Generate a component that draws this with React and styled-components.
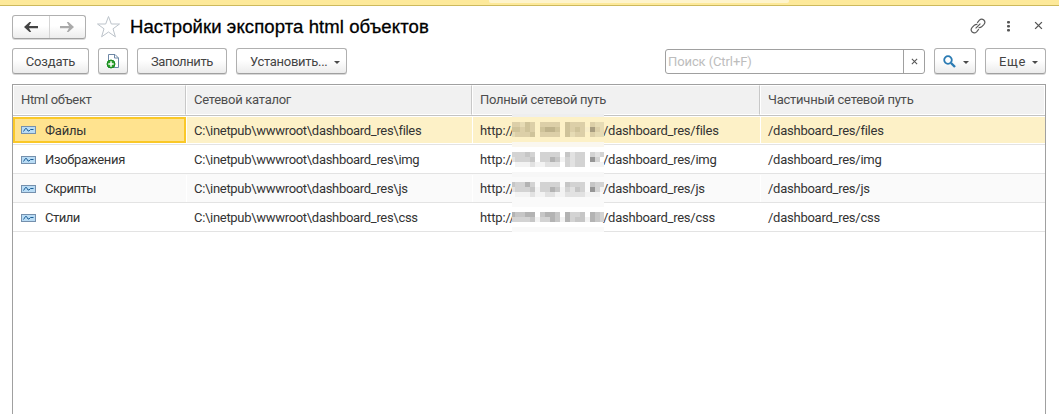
import React from 'react';
import styled, { createGlobalStyle, css } from 'styled-components';

const Global = createGlobalStyle`
  * { box-sizing: border-box; }
  html, body { margin: 0; padding: 0; background: #fff; overflow: hidden; }
  body { font: 13px/15px Roboto, "Liberation Sans", sans-serif; color: #333; }
`;

const Page = styled.div`
  width: 1059px;
  height: 414px;
  display: flex;
  flex-direction: column;
  overflow: hidden;
`;
const TopStrip = styled.div`
  flex: none;
  height: 6px;
  padding-left: 489px;
  background: #fde99a;
  border-bottom: 1px solid #cdb95c;
`;
const ActiveTab = styled.div`
  width: 300px;
  height: 3px;
  background: #fef4cc;
  border-radius: 0 0 2px 2px;
`;
const TitleBar = styled.header`
  flex: none;
  display: flex;
  align-items: center;
  height: 42px;
  padding: 0 16px 0 12px;
`;
const raised = css`
  border: 1px solid #b0b0b0;
  border-bottom-color: #a0a0a0;
  border-radius: 3px;
  background: linear-gradient(#fff 45%, #ececec);
  box-shadow: 0 1px 0 #d8d8d8;
`;
const NavGroup = styled.div`
  ${raised}
  display: flex;
  width: 74px;
  height: 24px;
`;
const NavButton = styled.div`
  flex: 1;
  display: flex;
  align-items: center;
  justify-content: center;
  & + & { border-left: 1px solid #d4d4d4; }
`;
const Star = styled.svg`
  margin: 0 0 0 10px;
`;
const Title = styled.h1`
  flex: 1;
  margin: 0 0 0 9px;
  font: 18.5px/22px "Liberation Sans", Arial, sans-serif;
  letter-spacing: 0.1px;
  color: #000;
  -webkit-text-stroke: 0.3px #000;
`;
const WindowTools = styled.div`
  display: flex;
  align-items: center;
  margin-top: -3px;
`;
const Toolbar = styled.div`
  flex: none;
  display: flex;
  height: 36px;
  padding: 0 13px 0 12px;
`;
const Button = styled.div`
  ${raised}
  flex: none;
  display: flex;
  align-items: center;
  justify-content: ${p => (p.$start ? 'flex-start' : 'center')};
  padding-left: ${p => p.$start || 0}px;
  width: ${p => p.$w}px;
  height: 26px;
  margin-right: ${p => p.$mr || 0}px;
  color: #444;
  letter-spacing: ${p => p.$ls || 0}px;
  white-space: nowrap;
`;
const Caret = styled.svg`
  flex: none;
  margin-left: ${p => p.$ml}px;
  margin-top: 2px;
`;
const Search = styled.div`
  display: flex;
  width: 260px;
  height: 25px;
  margin: 1px 9px 0 auto;
  border: 1px solid #a0a0a0;
  border-radius: 3px;
`;
const Placeholder = styled.div`
  flex: 1;
  padding: 4px 0 0 2px;
  color: #bdbdbd;
  letter-spacing: -0.1px;
`;
const Clear = styled.div`
  width: 21px;
  display: flex;
  align-items: center;
  justify-content: center;
  border-left: 1px solid #a0a0a0;
`;
const Table = styled.div`
  flex: 1;
  display: flex;
  flex-direction: column;
  width: 1034px;
  margin-left: 12px;
  border: 1px solid #a0a0a0;
  border-bottom: 0;
`;
const columns = css`
  display: grid;
  grid-template-columns: 173px 286px 288px 285px;
`;
const HeadRow = styled.div`
  ${columns}
  flex: none;
  height: 31px;
  border-bottom: 1px solid #c3c3c3;
`;
const HeadCell = styled.div`
  padding: 6px 0 0 7px;
  border: 1px solid #fff;
  border-right: 1px solid ${p => (p.$last ? '#fff' : '#c8c8c8')};
  background: #f1f1f1;
  color: #4d4d4d;
  letter-spacing: ${p => p.$ls}px;
`;
const Row = styled.div`
  ${columns}
  flex: none;
  height: 29px;
  padding-top: 1px;
  border-bottom: 1px solid #e3e3e3;
  background: ${p => (p.$alt ? '#fafafa' : '#fff')};
`;
const Cell = styled.div`
  display: flex;
  align-items: center;
  height: ${p => (p.$selected || p.$active ? 26 : 27)}px;
  padding-left: 8px;
  letter-spacing: ${p => p.$ls}px;
  white-space: pre;
  ${p => p.$selected && css`
    background: #fdf1c7;
    & + & { border-left: 1px solid #fff; padding-left: 7px; }
  `}
  ${p => p.$active && css`
    background: #ffe38f;
    border: 2px solid #fac828;
    padding-left: 6px;
  `}
`;
const NameIcon = styled.svg`
  margin-right: 9px;
`;
const Mask = styled.svg`
  position: relative;
  z-index: 1;
  flex: none;
  align-self: flex-start;
  overflow: visible;
  margin-right: -1px;
`;
const PathPrefix = styled.span`
  width: 32px;
  letter-spacing: -0.1px;
`;

const Arrow = ({ color, flip }) => (
  <svg width="14" height="10" viewBox="0 0 14 10">
    <g transform={flip ? 'translate(14 0) scale(-1 1)' : undefined}>
      <path d="M0 5L5.5 0H7.2L5 4H14V6.3H5L7.2 10H5.5Z" fill={color} />
    </g>
  </svg>
);
const Down = ({ ml }) => (
  <Caret $ml={ml} width="6" height="3" viewBox="0 0 6 3"><path d="M0 0H6L3 3Z" fill="#4a4a4a" /></Caret>
);
const Cross = ({ size, color }) => (
  <svg width={size} height={size} viewBox="0 0 8 8">
    <path d="M1 1L7 7M7 1L1 7" stroke={color} strokeWidth="1.2" />
  </svg>
);
const LineIcon = () => (
  <NameIcon width="15" height="8" viewBox="0 0 15 8">
    <rect x="0.5" y="0.5" width="14" height="7" fill="#b9dcf5" stroke="#7590ad" />
    <path d="M2.5 5.5L4.5 2.5H5.5L7 5H8L9.5 3.5H12.5" fill="none" stroke="#1d5f96" />
  </NameIcon>
);

const PALETTE = {
  gray: { a: '#f3f3f3', b: '#e2e2e2', c: '#d3d3d3', d: '#c6c6c6', e: '#b3b3b3', f: '#969696' },
  gold: { a: '#f8edc9', b: '#e6dbb4', c: '#dccfa8', d: '#cfc39a', e: '#bfb38c', f: '#a89d80' },
};
const MASKS = [
  { top: 5, strip: 25, fill: '#faf7ef', lines: ['ccbdc.cccc.dccc.cbb', 'ddcdc.deed.dcdcafcb', 'bcccd.cccc.dbcc.cbb'] },
  { top: 6, strip: 26, fill: '#f7f7f7', lines: ['cccdc.cccc.dbcc.cbc', 'bcccd.ccedacbcc.fc.', '.aaabaabbb.cbcc.aaa'] },
  { top: 7, strip: 27, fill: '#fafafa', lines: ['dccec.cccc.dccc.dcc', 'bcccdaccedacbdc.fca', '.aaabaabbaabbbbaaa.'] },
  { top: 8, strip: 23, fill: '#f9f9f9', lines: ['eddee.deed.eccd.edc', 'ccccdaccedaecddaedc'] },
];

const Pixels = ({ index }) => {
  const colors = index === 0 ? PALETTE.gold : PALETTE.gray;
  const { top, strip, fill, lines } = MASKS[index];
  return (
    <Mask width="92" height="26" viewBox="0 0 92 26" shapeRendering="crispEdges">
      {index === 0 && <rect x="0" y="-3" width="92" height="3" fill="#eeeeef" />}
      <rect x="0" y={strip} width="92" height="5" fill={fill} />
      {lines.map((line, y) =>
        [...line].map((v, x) =>
          colors[v] && (
            <rect key={`${x}-${y}`} x={x ? x * 5 - 2 : 0} y={top + y * 5} width={x === 0 ? 3 : x === 18 ? 4 : 5} height="5" fill={colors[v]} />
          )
        )
      )}
    </Mask>
  );
};

const ROWS = [
  ['Файлы', 'files', -0.2],
  ['Изображения', 'img', -0.33],
  ['Скрипты', 'js', -0.45],
  ['Стили', 'css', -0.5],
];

export default function App() {
  return (
    <Page>
      <Global />
      <TopStrip><ActiveTab /></TopStrip>
      <TitleBar>
        <NavGroup>
          <NavButton><Arrow color="#444" /></NavButton>
          <NavButton><Arrow color="#aaa" flip /></NavButton>
        </NavGroup>
        <Star width="25" height="24" viewBox="0 0 25 24">
          <path d="M12.5 1.5L15.3 9H23.5L17 13.8L19.4 21.8L12.5 17L5.6 21.8L8 13.8L1.5 9H9.7Z" fill="#fff" stroke="#bcc3ca" />
        </Star>
        <Title>Настройки экспорта html объектов</Title>
        <WindowTools>
          <svg width="16" height="16" viewBox="0 0 16 16" fill="none" stroke="#5a5a5a" strokeWidth="1.2">
            <path d="M7.2 4.8L9.4 2.2Q11.6 0 13.8 2Q16 4.2 13.8 6.6L11.6 8.8Q10.2 10 8.6 9.6" />
            <path d="M8.8 11.2L6.6 13.8Q4.4 16 2.2 14Q0 11.8 2.2 9.4L4.4 7.2Q5.8 6 7.4 6.4" />
            <path d="M5.6 10.4L10.4 5.6" />
          </svg>
          <svg width="48" height="12" viewBox="0 0 48 12" fill="#555">
            <rect x="21" y="1" width="3" height="2.5" rx="1" /><rect x="21" y="5" width="3" height="2.5" rx="1" /><rect x="21" y="9" width="3" height="2.5" rx="1" />
          </svg>
          <Cross size={9} color="#555" />
        </WindowTools>
      </TitleBar>
      <Toolbar>
        <Button $w={77} $mr={9} $ls={-0.17}>Создать</Button>
        <Button $w={30} $mr={9}>
          <svg width="14" height="16" viewBox="0 0 14 16">
            <path d="M2.5 1.5H9L12.5 5V14.5H2.5Z" fill="#fff" stroke="#6d87a5" />
            <path d="M8.5 1.5V5H12.5" fill="none" stroke="#6d87a5" />
            <circle cx="5" cy="11" r="4" fill="#2ca02c" stroke="#168a1f" />
            <path d="M2.3 11H7.7M5 8.3V13.7" stroke="#fff" strokeWidth="1.5" />
          </svg>
        </Button>
        <Button $w={90} $mr={9} $ls={-0.38}>Заполнить</Button>
        <Button $w={111} $start={13} $ls={-0.29}>Установить...<Down ml={7} /></Button>
        <Search>
          <Placeholder>Поиск (Ctrl+F)</Placeholder>
          <Clear><Cross size={7} color="#555" /></Clear>
        </Search>
        <Button $w={42} $mr={9} $start={8}>
          <svg width="13" height="13" viewBox="0 0 13 13" fill="none" stroke="#2b7bb3">
            <circle cx="5" cy="5" r="3.8" strokeWidth="1.8" /><path d="M8 8L12 12" strokeWidth="2.4" />
          </svg>
          <Down ml={7} />
        </Button>
        <Button $w={61} $start={13} $ls={0.7}>Еще<Down ml={6} /></Button>
      </Toolbar>
      <Table>
        <HeadRow>
          <HeadCell $ls={-0.33}>Html объект</HeadCell>
          <HeadCell $ls={-0.27}>Сетевой каталог</HeadCell>
          <HeadCell $ls={-0.28}>Полный сетевой путь</HeadCell>
          <HeadCell $ls={-0.24} $last>Частичный сетевой путь</HeadCell>
        </HeadRow>
        {ROWS.map(([name, dir, spacing], i) => (
          <Row key={dir} $alt={i === 2}>
            <Cell $active={i === 0} $ls={spacing}><LineIcon />{name}</Cell>
            <Cell $selected={i === 0} $ls={-0.3}>{`C:\\inetpub\\wwwroot\\dashboard_res\\${dir}`}</Cell>
            <Cell $selected={i === 0} $ls={-0.25}>
              <PathPrefix>http://</PathPrefix><Pixels index={i} />{`/dashboard_res/${dir}`}
            </Cell>
            <Cell $selected={i === 0} $ls={-0.25}>{`/dashboard_res/${dir}`}</Cell>
          </Row>
        ))}
      </Table>
    </Page>
  );
}
